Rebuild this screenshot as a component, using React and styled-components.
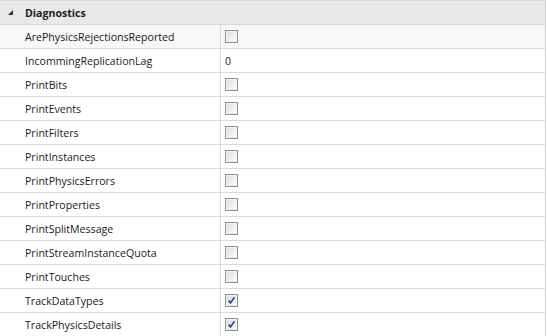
import React from 'react';
import styled, { createGlobalStyle } from 'styled-components';

const GlobalStyle = createGlobalStyle`
  html, body {
    margin: 0;
    padding: 0;
    background: #ffffff;
  }
  body {
    font-family: "Open Sans", "Liberation Sans", sans-serif;
    font-size: 10.6px;
    color: #1a1a1a;
  }
`;

const Grid = styled.div`
  width: 546px;
  height: 336px;
  border-right: 1px solid #d4d4d4;
  border-top: 1px solid #dadada;
  box-sizing: border-box;
  overflow: hidden;
`;

const Header = styled.div`
  display: flex;
  align-items: center;
  height: 23px;
  background: #e8e8e8;
  border-bottom: 1px solid #d6d6d6;
  font-weight: bold;
  color: #1e1e1e;
`;

const Arrow = styled.span`
  width: 25px;
  display: flex;
  justify-content: center;
  svg { display: block; margin-left: -4px; }
`;

const Row = styled.div`
  display: grid;
  grid-template-columns: 221px 1fr;
  height: 23px;
  border-bottom: 1px solid #dadada;
  background: ${p => (p.$selected ? '#f7f7f7' : '#ffffff')};
`;

const Name = styled.div`
  display: flex;
  align-items: center;
  padding-left: 25px;
  border-right: 1px solid #dadada;
  white-space: nowrap;
`;

const Value = styled.div`
  display: flex;
  align-items: center;
  padding-left: 4px;
`;

const Check = styled.span`
  width: 13px;
  height: 13px;
  box-sizing: border-box;
  border: 1px solid #8f8f8f;
  background: linear-gradient(135deg, #dcdcdc 0%, #f4f4f4 70%, #fbfbfb 100%);
  box-shadow: inset 0 0 0 1px #f2f2f2;
  display: flex;
  align-items: center;
  justify-content: center;
`;

const rows = [
  ['ArePhysicsRejectionsReported', false],
  ['IncommingReplicationLag', '0'],
  ['PrintBits', false],
  ['PrintEvents', false],
  ['PrintFilters', false],
  ['PrintInstances', false],
  ['PrintPhysicsErrors', false],
  ['PrintProperties', false],
  ['PrintSplitMessage', false],
  ['PrintStreamInstanceQuota', false],
  ['PrintTouches', false],
  ['TrackDataTypes', true],
  ['TrackPhysicsDetails', true],
];

const Tick = () => (
  <svg width="9" height="9" viewBox="0 0 9 9">
    <path d="M1.5 4.5 L3.5 7 L7.5 1.2" fill="none" stroke="#24439a" strokeWidth="1.6" />
  </svg>
);

export default function App() {
  return (
    <>
      <GlobalStyle />
      <Grid>
        <Header>
          <Arrow>
            <svg width="5" height="5" viewBox="0 0 5 5">
              <polygon points="5,0 5,5 0,5" fill="#333" />
            </svg>
          </Arrow>
          Diagnostics
        </Header>
        {rows.map(([name, val], i) => (
          <Row key={name} $selected={i === 0}>
            <Name>{name}</Name>
            <Value>
              {typeof val === 'string' ? val : <Check>{val && <Tick />}</Check>}
            </Value>
          </Row>
        ))}
      </Grid>
    </>
  );
}
